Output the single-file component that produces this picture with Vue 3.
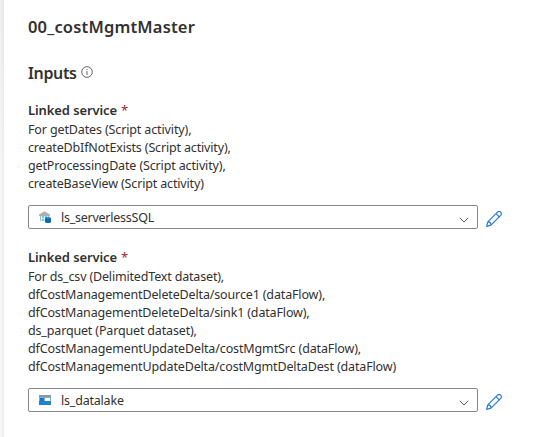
<script setup>
const services = [
  {
    value: 'ls_serverlessSQL',
    kind: 'sql',
    lines: [
      { text: 'For getDates (Script activity),', s: -0.13 },
      { text: 'createDbIfNotExists (Script activity),', s: -0.16 },
      { text: 'getProcessingDate (Script activity),', s: -0.14 },
      { text: 'createBaseView (Script activity)', s: -0.155 },
    ],
  },
  {
    value: 'ls_datalake',
    kind: 'lake',
    lines: [
      { text: 'For ds_csv (DelimitedText dataset),', s: -0.17 },
      { text: 'dfCostManagementDeleteDelta/source1 (dataFlow),', s: -0.145 },
      { text: 'dfCostManagementDeleteDelta/sink1 (dataFlow),', s: -0.15 },
      { text: 'ds_parquet (Parquet dataset),', s: -0.16 },
      { text: 'dfCostManagementUpdateDelta/costMgmtSrc (dataFlow),', s: -0.13 },
      { text: 'dfCostManagementUpdateDelta/costMgmtDeltaDest (dataFlow)', s: -0.145 },
    ],
  },
]
</script>

<template>
  <div class="page">
    <div class="gutter"></div>
    <main class="panel">
      <h1 class="title">00_costMgmtMaster</h1>
      <h2 class="section">
        <span class="inputs">Inputs</span>
        <svg class="info" viewBox="0 0 12 12" width="12" height="12" fill="none" stroke="#555" stroke-width=".9">
          <circle cx="6" cy="6" r="5.3" />
          <path d="M6 5v4M6 3v1" />
        </svg>
      </h2>
      <section v-for="item in services" :key="item.value" class="service">
        <div class="label"><span class="name">Linked service</span><span class="star">*</span></div>
        <div v-for="line in item.lines" :key="line.text" class="line">
          <span :style="{ letterSpacing: line.s + 'px' }">{{ line.text }}</span>
        </div>
        <div class="row">
          <div class="select">
            <svg v-if="item.kind === 'sql'" class="glyph" viewBox="0 0 12 12" width="12" height="12">
              <path d="M0 3.500 5.500.300 11 3.500V5H0z" fill="#b0b0b0" />
              <path d="M1 5h9v5H1z" fill="#d5f5fa" />
              <path d="M1 5h1v5H1zM9 5h1v2H9z" fill="#b4b4b4" />
              <path d="M3 5h2v2H3zM6 5h2v2H6zM3 8h2v2H3z" fill="#50d4ea" />
              <path d="M6 7v4c0 1.300 6 1.300 6 0V7z" fill="#0868bd" />
              <ellipse cx="9" cy="7" rx="3" ry="1" fill="#287fc9" />
            </svg>
            <svg v-else class="glyph" viewBox="0 0 12 12" width="12" height="12">
              <path d="M0 1h12v2H0z" fill="#949494" />
              <path d="M0 3h12v8H0z" fill="#6bb1e8" />
              <path d="M1 4h4v3H1z" fill="#1676ca" />
              <path d="M0 7h12v4H0z" fill="#2381d1" />
              <path d="M6 4h5v3H6z" fill="#fff" />
            </svg>
            <span :class="['value', item.kind]">{{ item.value }}</span>
            <svg class="chevron" viewBox="0 0 10 6" width="10" height="6" fill="none" stroke="#605e5c"><path d="m.8.8 4.200 4.200L9.200.8" /></svg>
          </div>
          <svg class="pencil" viewBox="0 0 16 16" width="16" height="16" fill="none" stroke="#2678d3" stroke-width="1.2" stroke-linejoin="round">
            <path d="M.7 15.300 1.800 10.900 11.500 1.200a2.250 2.250 0 0 1 3.200 3.200L5 14.100ZM10 2.700l3.200 3.200M1.800 10.900C3.500 10.900 5 12.300 5 14.100" />
          </svg>
        </div>
      </section>
    </main>
  </div>
</template>

<style>
body { background: #fff; overflow: hidden; }
</style>

<style scoped>
.page { display: flex; height: 437px; font-family: "Noto Sans", "Open Sans", sans-serif; color: #323130; background: #fff; }
.gutter { width: 4px; flex: none; background: linear-gradient(180deg, rgba(0, 0, 0, .03), transparent 170px), linear-gradient(90deg, #f8f8f8, #ededed); }
.panel { flex: 1; padding: 15px 0 0 24px; }
.title { margin: 0; font-size: 16.5px; font-weight: 600; line-height: 24px; white-space: nowrap; letter-spacing: .18px; }
.section { display: flex; margin: 22px 0 0; font-size: 16px; font-weight: 600; line-height: 24px; }
.inputs { width: 48px; letter-spacing: -.35px; }
.info { margin: 5px 0 0 5px; }
.service { padding-top: 15px; }
.service + .service { padding-top: 18px; }
.label { font-size: 13px; line-height: 20px; height: 21px; font-weight: 600; white-space: nowrap; }
.name { letter-spacing: -.1px; }
.star { color: #a4262c; margin-left: 4px; font-weight: 400; }
.line { font-size: 12.5px; line-height: 18px; height: 18px; white-space: nowrap; }
.row { display: flex; margin-top: 12px; }
.select { box-sizing: border-box; width: 450px; height: 24px; border: 1px solid #8a8886; border-radius: 2px; display: flex; align-items: center; padding: 0 8px 0 10px; }
.value { flex: 1; margin-left: 10px; font-size: 12.5px; }
.sql { letter-spacing: -.25px; }
.lake { letter-spacing: -.2px; }
.chevron { margin-top: 6px; }
.pencil { margin: 6px 0 0 8px; }
</style>
